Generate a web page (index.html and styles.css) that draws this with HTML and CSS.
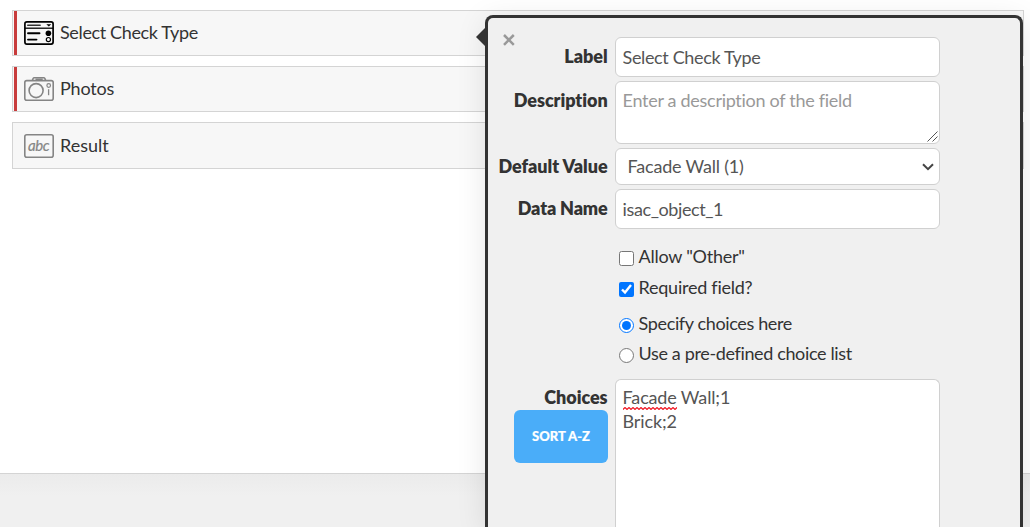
FILE: index.html
```html
<!DOCTYPE html>
<html lang="en">
<head>
<meta charset="utf-8">
<title>Form builder</title>
<link rel="stylesheet" href="styles.css">
</head>
<body>
<main class="canvas">
  <div class="field required">
    <svg class="icon" width="30" height="24" viewBox="0 0 30 24" fill="none" stroke="#000" stroke-width="1.7">
      <rect x=".9" y=".9" width="28.2" height="22.2" rx="2"/>
      <path d="M1 7.2h28" stroke-width="1.3"/>
      <path d="M3.7 4.2h12.5" stroke-width="1.4" stroke="#333" stroke-linecap="round"/>
      <path d="M22.3 3.2h5L24.8 5.5z" fill="#000" stroke="none"/>
      <path d="M4 12.3h11.5M4 18.6h8.5" stroke-width="1.9" stroke-linecap="round"/>
      <circle cx="24.4" cy="12.3" r="2.8" fill="#000" stroke="none"/>
      <circle cx="24.4" cy="18.6" r="2.1" stroke-width="1.2"/>
    </svg>
    <span class="title tight">Select Check Type</span>
  </div>
  <div class="field required">
    <svg class="icon" width="30" height="24" viewBox="0 0 30 24" fill="none" stroke="#858585" stroke-width="1.6">
      <rect x=".8" y="3.6" width="28.4" height="19.6" rx="2"/>
      <path d="M8.4 3.4l.8-2.1Q9.5.8 10.2.8h9.6q.7 0 1 .5l.8 2.1M11.5 2.5h7.2"/>
      <circle cx="12.1" cy="13.6" r="7"/>
      <circle cx="24.7" cy="8.5" r="1.8" stroke-width="1.2"/>
      <path d="M24.6 12.2v6" stroke-width="1.3"/>
    </svg>
    <span class="title photos">Photos</span>
  </div>
  <div class="field last">
    <svg class="icon" width="30" height="24" viewBox="0 0 30 24">
      <rect x=".8" y=".8" width="28.4" height="22.4" rx="2" fill="none" stroke="#858585" stroke-width="1.6"/>
      <text class="abc" x="4" y="16.7" textLength="21.5">abc</text>
    </svg>
    <span class="title">Result</span>
  </div>
</main>

<section class="popover">
  <svg class="arrow" width="10" height="20" viewBox="0 0 10 20"><path d="M10 0v20L0 10z" fill="#333"/></svg>
  <svg class="close" width="12" height="12" viewBox="0 0 12 12"><path d="M1 1l9.8 9.8M10.8 1L1 10.8" stroke="#999" stroke-width="2.5"/></svg>
  <form class="form">
    <label class="name" for="label">Label</label>
    <input class="control text tight" id="label" value="Select Check Type">
    <label class="name" for="description">Description</label>
    <div class="area">
      <textarea class="control description" id="description" placeholder="Enter a description of the field"></textarea>
      <svg class="grip" width="11" height="11" viewBox="0 0 11 11"><path d="M.5 10.5l10-10M5.5 10.5l5-5" stroke="#555"/></svg>
    </div>
    <label class="name raised" for="default">Default Value</label>
    <div class="control select" id="default">
      <span>Facade Wall (1)</span>
      <svg width="12" height="8" viewBox="0 0 12 8"><path d="M1 1.2l5 5 5-5" fill="none" stroke="#444" stroke-width="2"/></svg>
    </div>
    <label class="name data-name" for="data">Data Name</label>
    <input class="control text data" id="data" value="isac_object_1">
    <div class="options">
      <label class="option"><input type="checkbox"><span class="other">Allow "Other"</span></label>
      <label class="option"><input type="checkbox" checked><span class="other">Required field?</span></label>
      <label class="option source"><input type="radio" name="source" checked><span>Specify choices here</span></label>
      <label class="option list"><input type="radio" name="source"><span>Use a pre-defined choice list</span></label>
    </div>
    <div class="side">
      <label class="name raised choices-name">Choices</label>
      <button class="sort" type="button">SORT A-Z</button>
    </div>
    <div class="control choices">
      <div><span class="misspelled">Facade<svg class="squiggle" width="54" height="3"><defs><pattern id="wave" width="4" height="3" patternUnits="userSpaceOnUse"><path d="M-1 1.5L0 2.4 2 .6 4 2.4 5 1.5" fill="none" stroke="#f01824" stroke-width="1.3"/></pattern></defs><rect width="54" height="3" fill="url(#wave)"/></svg></span> Wall;1</div>
      <div>Brick;2</div>
    </div>
  </form>
</section>
</body>
</html>
```
FILE: styles.css
```css
* { box-sizing: border-box; }

body {
  margin: 0;
  height: 527px;
  overflow: hidden;
  background: linear-gradient(#ebebeb, #f0f0f0 22px) 0 474px no-repeat #f0f0f0;
  color: #333;
  font: 18px/24px Lato, sans-serif;
}

.canvas {
  display: flex;
  flex-direction: column;
  gap: 10px;
  height: 474px;
  padding: 10px 6px 0 12px;
  background: #fff;
  border-bottom: 1px solid #d4d4d4;
}

.field {
  display: flex;
  align-items: center;
  gap: 6px;
  height: 46px;
  padding-left: 11px;
  background: #f7f7f7;
  border: 1px solid #d4d4d4;
}

.required {
  background: linear-gradient(#c83c3c, #c83c3c) 1px 0 / 3px 100% no-repeat #f7f7f7;
}

.last { height: 47px; }

.title { padding-bottom: 2px; }
.tight { letter-spacing: -.36px; }
.photos { letter-spacing: -.2px; }

.abc {
  fill: #858585;
  stroke: #858585;
  stroke-width: .2px;
  font: italic 15px Lato, sans-serif;
}

.popover {
  position: absolute;
  top: 15px;
  left: 485px;
  width: 538px;
  height: 512px;
  padding-top: 19px;
  background: #f0f0f0;
  border: 3px solid #333;
  border-bottom: 0;
  border-radius: 8px 8px 0 0;
  box-shadow: 0 5px 30px rgba(0, 0, 0, .1);
}

.arrow { position: absolute; top: 9px; left: -12px; }
.close { position: absolute; top: 16px; left: 15px; }

.form {
  display: grid;
  grid-template-columns: 119.6px 325px;
  grid-template-rows: 40px 63px 37px 40px auto 1fr;
  column-gap: 7.4px;
  row-gap: 4px;
  align-items: start;
  height: 490px;
}

.name {
  padding-top: 7px;
  font-weight: 800;
  letter-spacing: -.05px;
  text-align: right;
  white-space: nowrap;
}

.raised { padding-top: 6px; }
.data-name { letter-spacing: -.15px; }
.choices-name { height: 31px; }

.control {
  width: 325px;
  margin: 0;
  padding: 5px 6.6px;
  background: #fff;
  border: 1px solid #d0d0d0;
  border-radius: 6px;
  color: #555;
  font: 18px/24px Lato, sans-serif;
  outline: none;
}

.text { height: 40px; padding: 7px 6.6px; }
.text.tight { letter-spacing: -.36px; }
.data { letter-spacing: -.4px; }

.area { position: relative; }
.description {
  display: block;
  height: 63px;
  padding-top: 6px;
  resize: none;
  letter-spacing: -.29px;
}
.description::placeholder { color: #999; }
.grip { position: absolute; right: 2px; bottom: 2px; }

.select {
  display: flex;
  align-items: center;
  justify-content: space-between;
  height: 37px;
  padding: 0 5px 0 11.6px;
  letter-spacing: -.2px;
}
.select span { padding-bottom: 2px; }

.options {
  display: flex;
  flex-direction: column;
  grid-column: 2;
  gap: 7px;
  padding: 12px 0 9px 4px;
}

.option {
  display: flex;
  align-items: center;
  gap: 4.6px;
  height: 24px;
  letter-spacing: -.36px;
}

.option span { padding-bottom: 2px; }
.option .other { letter-spacing: -.25px; }

.option input {
  width: 15px;
  height: 15px;
  margin: 3px 0 0;
  accent-color: #0075ff;
}

.source { margin-top: 5px; }
.list { margin-top: -1px; }

.side {
  display: flex;
  flex-direction: column;
  align-items: flex-end;
  margin-right: -.4px;
}

.side .name { padding-right: .4px; }

.sort {
  width: 94px;
  height: 53px;
  padding: 0 0 2px;
  background: #4aadf9;
  border: 0;
  border-radius: 6px;
  color: #fff;
  font: 900 13px Lato, sans-serif;
  -webkit-text-stroke: .2px #fff;
}

.choices {
  height: 100%;
  border-bottom: 0;
  border-radius: 6px 6px 0 0;
  letter-spacing: -.15px;
}

.misspelled { position: relative; }
.squiggle { position: absolute; left: 0; bottom: -2px; }
```
